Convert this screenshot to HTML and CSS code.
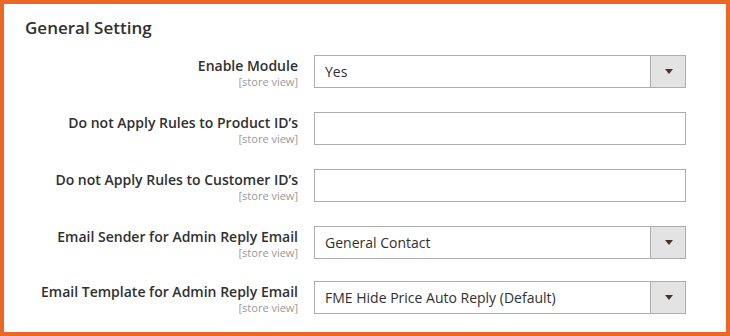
FILE: index.html
```html
<!DOCTYPE html>
<html lang="en">
<head>
	<meta charset="UTF-8">
	<title>General Setting</title>
	<link rel="stylesheet" href="styles.css">
</head>
<body>
	<div class="panel">
		<h2 class="panel-title">General Setting</h2>

		<div class="fields">
			<div class="field">
				<label class="field-label">Enable Module<span class="scope">[store view]</span></label>
				<div class="select"><span class="select-value">Yes</span><span class="select-arrow"></span></div>
			</div>
			<div class="field">
				<label class="field-label">Do not Apply Rules to Product ID’s<span class="scope">[store view]</span></label>
				<input type="text" class="input-text" value="">
			</div>
			<div class="field">
				<label class="field-label">Do not Apply Rules to Customer ID’s<span class="scope">[store view]</span></label>
				<input type="text" class="input-text" value="">
			</div>
			<div class="field field-tight">
				<label class="field-label">Email Sender for Admin Reply Email<span class="scope">[store view]</span></label>
				<div class="select"><span class="select-value">General Contact</span><span class="select-arrow"></span></div>
			</div>
			<div class="field">
				<label class="field-label">Email Template for Admin Reply Email<span class="scope">[store view]</span></label>
				<div class="select"><span class="select-value">FME Hide Price Auto Reply (Default)</span><span class="select-arrow"></span></div>
			</div>
		</div>
	</div>
</body>
</html>
```

FILE: styles.css
```css
body,div,h2,label,input{
	margin:0px;
	padding:0px;
}
body{
	font:400 14px/1.36 "Open Sans", "Liberation Sans", sans-serif;
	color:#303030;
	background:#fff;
}
.panel{
	box-sizing:border-box;
	width:730px;
	height:336px;
	border:4px solid #ec6723;
	padding:12px 0 0 21px;
}
.panel-title{
	font-size:17px;
	font-weight:600;
	line-height:23px;
	color:#303030;
	margin-bottom:16px;
}
.fields{
	display:flex;
	flex-direction:column;
}
.field{
	display:grid;
	grid-template-columns:273px 372px;
	column-gap:16px;
	align-items:start;
	height:33px;
	margin-bottom:24px;
}
.field-tight{
	margin-bottom:22px;
}
.field-label{
	display:block;
	text-align:right;
	font-weight:600;
	font-size:14px;
	line-height:19px;
	padding-top:1px;
}
.scope{
	display:block;
	font-size:11px;
	font-weight:400;
	line-height:13px;
	color:#999;
}
.select,
.input-text{
	box-sizing:border-box;
	height:33px;
	border:1px solid #adadad;
	background:#fff;
}
.input-text{
	display:block;
	width:372px;
	padding:0 10px;
	font:400 14px "Open Sans", "Liberation Sans", sans-serif;
	color:#303030;
	outline:none;
}
.select{
	display:flex;
	align-items:stretch;
}
.select-value{
	flex:1;
	padding:0 10px;
	line-height:31px;
	white-space:nowrap;
}
.select-arrow{
	width:34px;
	background:#e3e3e3;
	border-left:1px solid #adadad;
	display:flex;
	align-items:center;
	justify-content:center;
}
.select-arrow:after{
	content:"";
	width:0;
	height:0;
	border-left:4px solid transparent;
	border-right:4px solid transparent;
	border-top:5px solid #41362f;
	margin-left:1px;
}
```
